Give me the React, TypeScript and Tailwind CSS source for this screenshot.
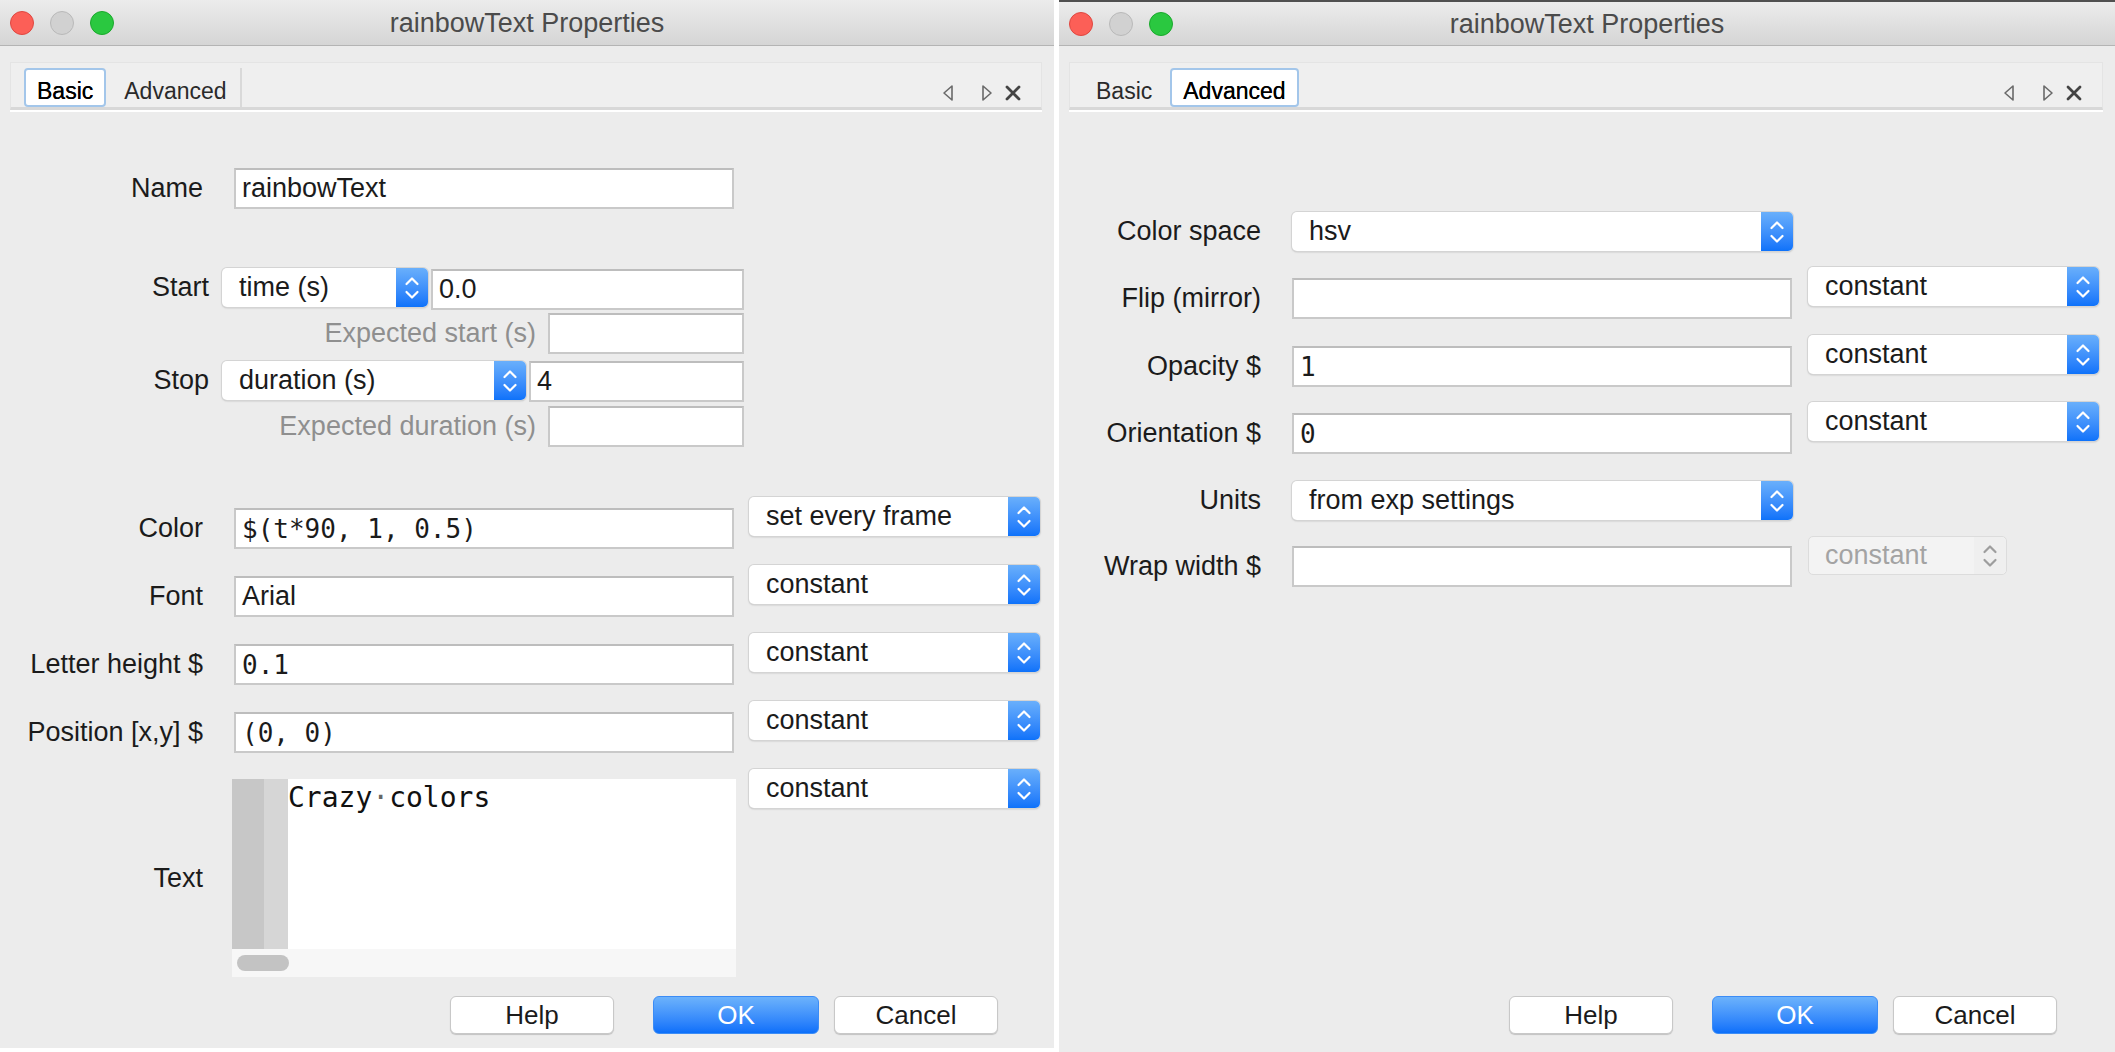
import React from "react";

const MONO = "font-['DejaVu_Sans_Mono','Liberation_Mono',monospace]";

function Chevrons({ color }: { color: string }) {
  return (
    <svg width="32" height="38" viewBox="0 0 32 38">
      <polyline points="10.5,15 16,9.5 21.5,15" fill="none" stroke={color} strokeWidth="2.2" strokeLinecap="round" strokeLinejoin="round" />
      <polyline points="10.5,23 16,28.5 21.5,23" fill="none" stroke={color} strokeWidth="2.2" strokeLinecap="round" strokeLinejoin="round" />
    </svg>
  );
}

type SelectProps = { text: string; className?: string; disabled?: boolean };

function Select({ text, className = "", disabled }: SelectProps) {
  if (disabled) {
    return (
      <div className={`flex h-[39px] rounded-[5px] bg-[#f3f3f3] border border-[#dcdcdc] ${className}`}>
        <div className="flex-1 flex items-center pl-[16px] text-[27px] leading-none text-[#a3a3a3]">{text}</div>
        <div className="w-[32px] flex items-center justify-center bg-[#efefef] rounded-r-[5px]">
          <Chevrons color="#9d9d9d" />
        </div>
      </div>
    );
  }
  return (
    <div className={`flex h-[39px] rounded-[5px] bg-white shadow-[0_0_0_1px_#d4d4d4,0_1px_2px_rgba(0,0,0,0.25)] ${className}`}>
      <div className="flex-1 flex items-center pl-[17px] text-[27px] leading-none text-[#1b1b1b]">{text}</div>
      <div className="w-[32px] flex items-center justify-center rounded-r-[5px] bg-linear-to-b from-[#69affb] to-[#0d72fa]">
        <Chevrons color="#ffffff" />
      </div>
    </div>
  );
}

function Field({ value = "", mono, className = "" }: { value?: string; mono?: boolean; className?: string }) {
  return (
    <div
      className={`h-[41px] bg-white border-2 border-[#c9c9c9] border-t-[#bdbdbd] flex items-center pl-[6px] leading-none text-[#1b1b1b] ${
        mono ? `${MONO} text-[26px]` : "text-[27px]"
      } ${className}`}
    >
      {value}
    </div>
  );
}

function Label({ children, w = 203, gray, h = 41, className = "" }: { children: React.ReactNode; w?: number; gray?: boolean; h?: number; className?: string }) {
  return (
    <div
      className={`flex items-center justify-end text-[27px] leading-none ${gray ? "text-[#8f8f8f]" : "text-[#1b1b1b]"} ${className}`}
      style={{ width: w, height: h }}
    >
      {children}
    </div>
  );
}

function TitleBar({ dark }: { dark?: boolean }) {
  return (
    <div
      className={`relative h-[46px] flex items-center justify-center bg-linear-to-b from-[#ececec] to-[#d5d5d5] border-b border-[#b4b4b4] ${
        dark ? "border-t-2 border-t-[#505050]" : ""
      }`}
    >
      <div className="absolute left-[10px] top-0 bottom-0 flex items-center gap-[16px]">
        <div className="w-[24px] h-[24px] rounded-full bg-[#fc5f57] border border-[#df4740]" />
        <div className="w-[24px] h-[24px] rounded-full bg-[#d1d1d1] border border-[#b9b9b9]" />
        <div className="w-[24px] h-[24px] rounded-full bg-[#2ac840] border border-[#1aa92c]" />
      </div>
      <span className="text-[27px] leading-none text-[#4b4b4b] pt-[2px]">rainbowText Properties</span>
    </div>
  );
}

function TabBar({ active }: { active: "basic" | "advanced" }) {
  const tab = (name: string, on: boolean) => (
    <div
      className={`h-[39px] px-[11px] pt-[8px] flex items-center text-[23px] leading-none rounded-[4px] border-2 ${
        on ? "bg-white border-[#a3c6ea] text-black [text-shadow:0_0_0.6px_#000]" : "border-transparent text-[#2a2a2a]"
      }`}
    >
      {name}
    </div>
  );
  return (
    <div className="mt-[16px] ml-[10px] mr-[12px] h-[48px] flex items-end bg-[#efefef] border border-[#e4e4e4] border-b-[3px] border-b-[#d8d8d8] shadow-[0_2px_0_#ffffff] pl-[13px]">
      <div className="flex items-end gap-[5px]">
        {tab("Basic", active === "basic")}
        {tab("Advanced", active === "advanced")}
      </div>
      {active === "basic" && <div className="w-[2px] h-[39px] bg-[#d9d9d9]" />}
      <div className="ml-auto mr-[20px] h-[39px] pt-[10px] flex items-center">
        <svg width="12" height="18" viewBox="0 0 12 18">
          <polygon points="10,2 2,9 10,16" fill="none" stroke="#6a6a6a" strokeWidth="1.6" strokeLinejoin="round" />
        </svg>
        <svg width="12" height="18" viewBox="0 0 12 18" className="ml-[27px]">
          <polygon points="2,2 10,9 2,16" fill="none" stroke="#6a6a6a" strokeWidth="1.6" strokeLinejoin="round" />
        </svg>
        <svg width="16" height="16" viewBox="0 0 16 16" className="ml-[12px]">
          <path d="M2 2 L14 14 M14 2 L2 14" stroke="#444" strokeWidth="2.8" strokeLinecap="round" />
        </svg>
      </div>
    </div>
  );
}

function Buttons({ className = "" }: { className?: string }) {
  const base = "w-[164px] h-[38px] rounded-[6px] flex items-center justify-center text-[26px] leading-none";
  return (
    <div className={`flex ${className}`}>
      <div className={`${base} ml-[450px] bg-white border border-[#c8c8c8] shadow-[0_1px_1px_rgba(0,0,0,0.18)] text-[#1b1b1b]`}>Help</div>
      <div className={`${base} ml-[39px] w-[166px] bg-linear-to-b from-[#6cb2fb] to-[#0a6ffa] border border-[#3b8cf6] text-white`}>OK</div>
      <div className={`${base} ml-[15px] bg-white border border-[#c8c8c8] shadow-[0_1px_1px_rgba(0,0,0,0.18)] text-[#1b1b1b]`}>Cancel</div>
    </div>
  );
}

function ParamRow({ label, value, mono, select, className = "" }: { label: string; value: string; mono?: boolean; select: string; className?: string }) {
  return (
    <div className={`flex items-start ${className}`}>
      <Label className="mt-[11px]">{label}</Label>
      <Field className="ml-[31px] mt-[11px] w-[500px]" value={value} mono={mono} />
      <Select className="ml-[15px] w-[291px]" text={select} />
    </div>
  );
}

function BasicWindow() {
  return (
    <div className="w-[1054px] h-[1048px] bg-[#ececec] flex flex-col shrink-0">
      <TitleBar />
      <TabBar active="basic" />

      <div className="mt-[58px] flex items-center">
        <Label>Name</Label>
        <Field className="ml-[31px] w-[500px]" value="rainbowText" />
      </div>

      {/* start / stop */}
      <div className="mt-[59px] flex items-start">
        <Label w={209} h={39}>Start</Label>
        <Select className="ml-[13px] w-[206px]" text="time (s)" />
        <Field className="ml-[3px] mt-[1px] w-[313px]" value="0.0" />
      </div>
      <div className="mt-[3px] flex items-center">
        <Label w={536} gray>Expected start (s)</Label>
        <Field className="ml-[12px] w-[196px]" />
      </div>
      <div className="mt-[7px] flex items-start">
        <Label w={209} h={39}>Stop</Label>
        <Select className="ml-[13px] w-[304px]" text="duration (s)" />
        <Field className="ml-[3px] w-[215px]" value="4" />
      </div>
      <div className="mt-[4px] flex items-center">
        <Label w={536} gray>Expected duration (s)</Label>
        <Field className="ml-[12px] w-[196px]" />
      </div>

      <ParamRow className="mt-[50px]" label="Color" value="$(t*90, 1, 0.5)" mono select="set every frame" />
      <ParamRow className="mt-[16px]" label="Font" value="Arial" select="constant" />
      <ParamRow className="mt-[16px]" label="Letter height $" value="0.1" mono select="constant" />
      <ParamRow className="mt-[16px]" label="Position [x,y] $" value="(0, 0)" mono select="constant" />

      <div className="mt-[16px] flex items-start">
        <Label className="mt-[10px]" h={198}>Text</Label>
        <div className="ml-[29px] mt-[10px] w-[504px] h-[198px] flex flex-col">
          <div className="flex flex-1 bg-white">
            <div className="w-[32px] bg-[#c7c7c7]" />
            <div className="w-[24px] bg-[#d6d6d6]" />
            <div className={`${MONO} text-[28px] leading-[30px] pt-[4px] text-[#111]`}>
              Crazy<span className="text-[#666]">·</span>colors
            </div>
          </div>
          <div className="h-[28px] bg-[#f7f7f7] flex items-center pl-[5px]">
            <div className="w-[52px] h-[16px] rounded-full bg-[#c3c3c3]" />
          </div>
        </div>
        <Select className="ml-[13px] w-[291px]" text="constant" />
      </div>

      <Buttons className="mt-auto mb-[14px]" />
    </div>
  );
}

function AdvancedWindow() {
  return (
    <div className="w-[1056px] h-[1052px] bg-[#ececec] flex flex-col shrink-0">
      <TitleBar dark />
      <TabBar active="advanced" />

      <div className="mt-[102px] flex items-center">
        <Label w={202} h={38}>Color space</Label>
        <Select className="ml-[31px] w-[501px]" text="hsv" />
      </div>

      <div className="mt-[16px] flex items-start">
        <Label w={202} className="mt-[11px]">Flip (mirror)</Label>
        <Field className="ml-[31px] mt-[11px] w-[500px]" />
        <Select className="ml-[16px] w-[291px]" text="constant" />
      </div>
      <div className="mt-[16px] flex items-start">
        <Label w={202} className="mt-[11px]">Opacity $</Label>
        <Field className="ml-[31px] mt-[11px] w-[500px]" value="1" mono />
        <Select className="ml-[16px] w-[291px]" text="constant" />
      </div>
      <div className="mt-[15px] flex items-start">
        <Label w={202} className="mt-[11px]">Orientation $</Label>
        <Field className="ml-[31px] mt-[11px] w-[500px]" value="0" mono />
        <Select className="ml-[16px] w-[291px]" text="constant" />
      </div>

      <div className="mt-[27px] flex items-center">
        <Label w={202} h={38}>Units</Label>
        <Select className="ml-[31px] w-[501px]" text="from exp settings" />
      </div>

      <div className="mt-[16px] flex items-start">
        <Label w={202} className="mt-[10px]">Wrap width $</Label>
        <Field className="ml-[31px] mt-[10px] w-[500px]" />
        <Select className="ml-[16px] w-[199px]" text="constant" disabled />
      </div>

      <Buttons className="mt-auto mb-[18px]" />
    </div>
  );
}

export default function App() {
  return (
    <div className="w-[2115px] h-[1052px] bg-white flex items-start gap-[5px] font-['Liberation_Sans',Arial,sans-serif] overflow-hidden">
      <BasicWindow />
      <AdvancedWindow />
    </div>
  );
}
